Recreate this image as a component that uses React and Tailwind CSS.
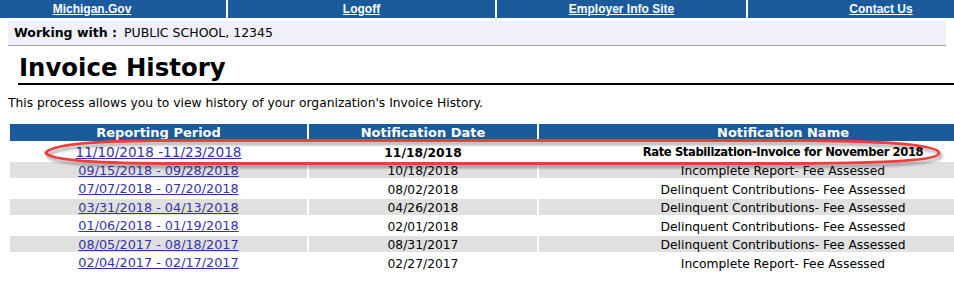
import React from 'react';

const navLinks = [
    { label: 'Michigan.Gov', cell: 'w-[226px] pr-[42px]' },
    { label: 'Logoff', cell: 'w-[269px] border-l-2 border-white' },
    { label: 'Employer Info Site', cell: 'w-[251px] border-l-2 border-white' },
    { label: 'Contact Us', cell: 'flex-1 pl-[60px] border-l-2 border-white' },
];

const invoices = [
    { period: '11/10/2018 -11/23/2018', date: '11/18/2018', name: 'Rate Stabilization-Invoice for November 2018', bold: true },
    { period: '09/15/2018 - 09/28/2018', date: '10/18/2018', name: 'Incomplete Report- Fee Assessed' },
    { period: '07/07/2018 - 07/20/2018', date: '08/02/2018', name: 'Delinquent Contributions- Fee Assessed' },
    { period: '03/31/2018 - 04/13/2018', date: '04/26/2018', name: 'Delinquent Contributions- Fee Assessed' },
    { period: '01/06/2018 - 01/19/2018', date: '02/01/2018', name: 'Delinquent Contributions- Fee Assessed' },
    { period: '08/05/2017 - 08/18/2017', date: '08/31/2017', name: 'Delinquent Contributions- Fee Assessed' },
    { period: '02/04/2017 - 02/17/2017', date: '02/27/2017', name: 'Incomplete Report- Fee Assessed' },
];

const verdana = "font-['DejaVu_Sans',Verdana,sans-serif]";

const App = () => {
    return (
        <div className={`relative w-[954px] h-[284px] overflow-hidden bg-white text-black ${verdana}`}>
            {/* top nav */}
            <div className="flex h-[18px] bg-[#1b5a9b] font-['Liberation_Sans',Arial,sans-serif]">
                {navLinks.map((n) => (
                    <div key={n.label} className={`flex items-center justify-center ${n.cell}`}>
                        <a href="#" className="text-white text-[12px] font-bold underline leading-none">
                            {n.label}
                        </a>
                    </div>
                ))}
            </div>

            {/* working with bar */}
            <div className="mx-2 mt-[3px] h-[25px] flex items-center bg-[#f0f0fa] border-b border-[#a0a0a0] pl-[6px] text-[12.5px]">
                <span className="font-bold">Working with :</span>
                <span className="ml-[7px]">PUBLIC SCHOOL, 12345</span>
            </div>

            {/* heading */}
            <div className="ml-[18px] mt-[7px] border-b-2 border-black">
                <h1 className="pl-[1px] text-[24.4px] font-bold leading-[30px]">Invoice History</h1>
            </div>

            <p className="ml-2 mt-[11px] text-[12.3px] leading-[15px]">
                This process allows you to view history of your organization's Invoice History.
            </p>

            {/* history table */}
            <table className="ml-2 mt-[11px] w-[1021px] border-separate border-spacing-[2px] text-[12.3px]">
                <thead>
                    <tr className="bg-[#1b5a9b] text-white">
                        <th className="w-[297px] h-[17px] p-0 leading-none font-bold text-[13px]">Reporting Period</th>
                        <th className="w-[228px] h-[17px] p-0 leading-none font-bold text-[13px]">Notification Date</th>
                        <th className="h-[17px] p-0 leading-none font-bold text-[13px]">Notification Name</th>
                    </tr>
                </thead>
                <tbody>
                    {invoices.map((row, i) => (
                        <tr key={row.period} className={i % 2 === 1 ? 'bg-[#e0e0e0]' : 'bg-white'}>
                            <td className="h-[16.5px] p-0 pt-[3px] text-center leading-none">
                                <a href="#" className={`text-[#3434a8] underline ${row.bold ? 'text-[13.6px]' : 'text-[12.8px]'}`}>{row.period}</a>
                            </td>
                            <td className={`h-[16.5px] p-0 pt-[3px] text-center leading-none ${row.bold ? 'font-bold' : ''}`}>{row.date}</td>
                            <td className={`h-[16.5px] p-0 pt-[3px] text-center leading-none ${row.bold ? 'font-bold text-[11.6px] tracking-[-0.4px]' : ''}`}>{row.name}</td>
                        </tr>
                    ))}
                </tbody>
            </table>

            {/* red highlight drawn over the first row */}
            <svg className="absolute left-0 top-0 pointer-events-none" width="954" height="284">
                <defs>
                    <filter id="shadow" x="-5%" y="-50%" width="110%" height="200%">
                        <feDropShadow dx="2" dy="3" stdDeviation="1.5" floodColor="#000" floodOpacity="0.35" />
                    </filter>
                </defs>
                <path
                    d="M 46 153 C 50 145, 90 141, 160 140.5 L 800 140.5 C 900 141, 939 146, 939 153 C 939 159, 905 163, 800 163.5 L 160 163.5 C 90 163, 50 160, 46 153 Z"
                    fill="none"
                    stroke="#ee3d3d"
                    strokeWidth="3"
                    filter="url(#shadow)"
                />
            </svg>
        </div>
    );
};

export default App;
